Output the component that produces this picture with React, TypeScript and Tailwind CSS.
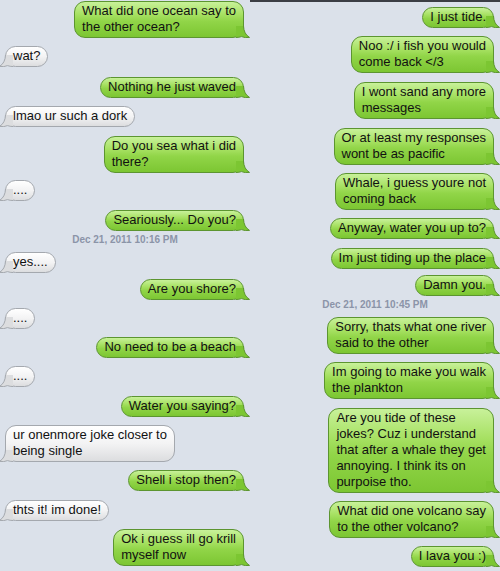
import React from "react";

type Msg = {
  kind: "me" | "them" | "time";
  lines: string[];
  mt: string;
};

const leftMsgs: Msg[] = [
  { kind: "me", lines: ["What did one ocean say to", "the other ocean?"], mt: "mt-[1px]" },
  { kind: "them", lines: ["wat?"], mt: "mt-[8px]" },
  { kind: "me", lines: ["Nothing he just waved"], mt: "mt-[10px]" },
  { kind: "them", lines: ["lmao ur such a dork"], mt: "mt-[8px]" },
  { kind: "me", lines: ["Do you sea what i did", "there?"], mt: "mt-[9px]" },
  { kind: "them", lines: ["...."], mt: "mt-[7px]" },
  { kind: "me", lines: ["Seariously... Do you?"], mt: "mt-[9px]" },
  { kind: "time", lines: ["Dec 21, 2011 10:16 PM"], mt: "mt-[3px]" },
  { kind: "them", lines: ["yes...."], mt: "mt-[6px]" },
  { kind: "me", lines: ["Are you shore?"], mt: "mt-[6px]" },
  { kind: "them", lines: ["...."], mt: "mt-[8px]" },
  { kind: "me", lines: ["No need to be a beach"], mt: "mt-[8px]" },
  { kind: "them", lines: ["...."], mt: "mt-[8px]" },
  { kind: "me", lines: ["Water you saying?"], mt: "mt-[9px]" },
  { kind: "them", lines: ["ur onenmore joke closer to", "being single"], mt: "mt-[8px]" },
  { kind: "me", lines: ["Shell i stop then?"], mt: "mt-[8px]" },
  { kind: "them", lines: ["thts it! im done!"], mt: "mt-[9px]" },
  { kind: "me", lines: ["Ok i guess ill go krill", "myself now"], mt: "mt-[8px]" },
];

const rightMsgs: Msg[] = [
  { kind: "me", lines: ["I just tide."], mt: "mt-[5px]" },
  { kind: "me", lines: ["Noo :/ i fish you would", "come back </3"], mt: "mt-[8px]" },
  { kind: "me", lines: ["I wont sand any more", "messages"], mt: "mt-[9px]" },
  { kind: "me", lines: ["Or at least my responses", "wont be as pacific"], mt: "mt-[9px]" },
  { kind: "me", lines: ["Whale, i guess youre not", "coming back"], mt: "mt-[8px]" },
  { kind: "me", lines: ["Anyway, water you up to?"], mt: "mt-[8px]" },
  { kind: "me", lines: ["Im just tiding up the place"], mt: "mt-[9px]" },
  { kind: "me", lines: ["Damn you."], mt: "mt-[6px]" },
  { kind: "time", lines: ["Dec 21, 2011 10:45 PM"], mt: "mt-[3px]" },
  { kind: "me", lines: ["Sorry, thats what one river", "said to the other"], mt: "mt-[6px]" },
  { kind: "me", lines: ["Im going to make you walk", "the plankton"], mt: "mt-[8px]" },
  {
    kind: "me",
    lines: [
      "Are you tide of these",
      "jokes? Cuz i understand",
      "that after a whale they get",
      "annoying. I think its on",
      "purpoise tho.",
    ],
    mt: "mt-[9px]",
  },
  { kind: "me", lines: ["What did one volcano say", "to the other volcano?"], mt: "mt-[8px]" },
  { kind: "me", lines: ["I lava you :)"], mt: "mt-[8px]" },
];

const Tail: React.FC<{ me: boolean }> = ({ me }) => (
  <svg
    width="14"
    height="12"
    viewBox="0 0 14 12"
    className={
      me
        ? "absolute right-[-7px] bottom-[-1px]"
        : "absolute left-[-7px] bottom-[-1px] -scale-x-100"
    }
  >
    <path
      d="M0 0 H7.5 Q7.8 8 13.5 11.4 Q9 12.2 5.5 10.6 Q3 11.5 0 11.5 Z"
      fill={me ? "#7cc632" : "#dcdddf"}
    />
    <path
      d="M7.5 0 Q7.8 8 13.5 11.4 Q9 12.2 5.5 10.6 Q3 11.5 0 11.5"
      fill="none"
      stroke={me ? "#5c9530" : "#a4a8ae"}
      strokeWidth="1"
    />
  </svg>
);

const Bubble: React.FC<{ msg: Msg }> = ({ msg }) => {
  if (msg.kind === "time") {
    return (
      <div
        className={`${msg.mt} self-center text-[10px] leading-3 font-bold text-[#8b94a8]`}
      >
        {msg.lines[0]}
      </div>
    );
  }
  const me = msg.kind === "me";
  return (
    <div
      className={`${msg.mt} relative whitespace-nowrap rounded-[11px] border px-[7px] pt-[1px] pb-[2px] text-[13px] leading-4 text-[#111111] ${
        me
          ? "self-end mr-[6px] border-[#5c9530] bg-[linear-gradient(to_bottom,#c8f19a_0%,#a7e163_35%,#91d548_55%,#7cc632_100%)]"
          : "self-start ml-[5px] border-[#a4a8ae] bg-[linear-gradient(to_bottom,#ffffff_0%,#f3f3f4_50%,#dcdddf_100%)]"
      }`}
    >
      {msg.lines.map((l, i) => (
        <div key={i}>{l}</div>
      ))}
      <Tail me={me} />
    </div>
  );
};

export default function App() {
  return (
    <div
      className="flex h-[571px] w-[500px] overflow-hidden bg-[#dbe1ea]"
      style={{ fontFamily: '"Liberation Sans", Arial, sans-serif' }}
    >
      <div className="flex w-[250px] flex-col">
        {leftMsgs.map((m, i) => (
          <Bubble key={i} msg={m} />
        ))}
      </div>
      <div className="flex w-[250px] flex-col">
        <div className="h-[2px] w-full bg-[#3b3e44]" />
        {rightMsgs.map((m, i) => (
          <Bubble key={i} msg={m} />
        ))}
      </div>
    </div>
  );
}
